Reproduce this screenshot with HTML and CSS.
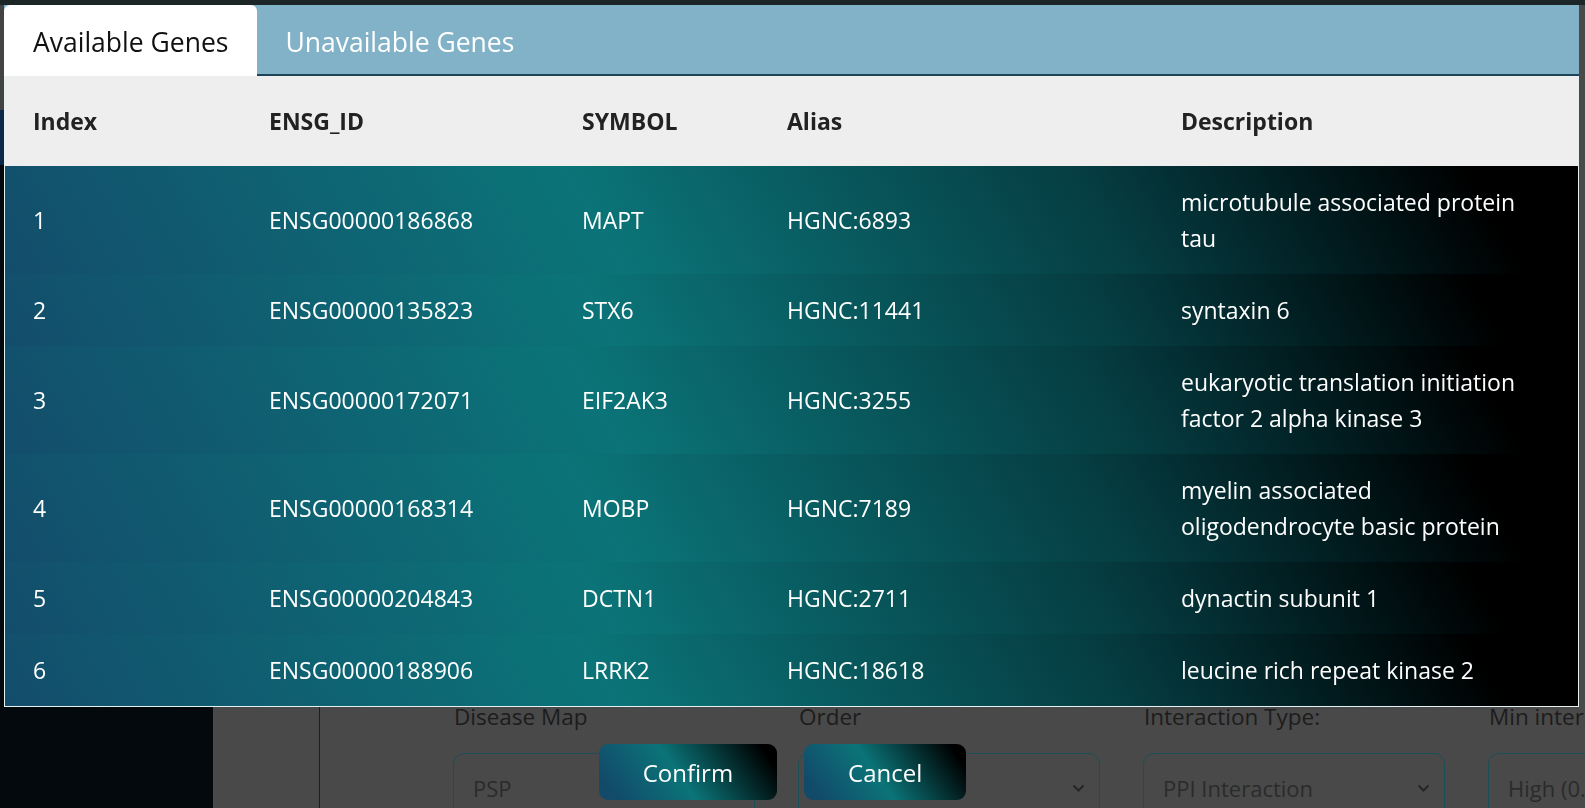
FILE: index.html
```html
<!DOCTYPE html>
<html lang="en">
<head>
<meta charset="utf-8">
<title>Genes</title>
<link rel="stylesheet" href="styles.css">
</head>
<body>
<div class="page">
  <div class="topstrip"></div>
  <div class="content">
    <aside class="sidebar">
      <div class="sb-gray"></div>
      <div class="sb-navy"></div>
    </aside>
    <div class="main">
      <div class="leftpanel"></div>
      <div class="form">
        <div class="field">
          <div class="field-label">Disease Map</div>
          <div class="select"><span>PSP</span><svg class="chev" width="13" height="8" viewBox="0 0 13 8"><path d="M1.5 1.5 L6.5 6.5 L11.5 1.5" fill="none" stroke="#262626" stroke-width="2"/></svg></div>
        </div>
        <div class="field">
          <div class="field-label">Order</div>
          <div class="select"><span>1</span><svg class="chev" width="13" height="8" viewBox="0 0 13 8"><path d="M1.5 1.5 L6.5 6.5 L11.5 1.5" fill="none" stroke="#262626" stroke-width="2"/></svg></div>
        </div>
        <div class="field">
          <div class="field-label">Interaction Type:</div>
          <div class="select"><span>PPI Interaction</span><svg class="chev" width="13" height="8" viewBox="0 0 13 8"><path d="M1.5 1.5 L6.5 6.5 L11.5 1.5" fill="none" stroke="#262626" stroke-width="2"/></svg></div>
        </div>
        <div class="field">
          <div class="field-label">Min interaction score:</div>
          <div class="select"><span>High (0.700)</span><svg class="chev" width="13" height="8" viewBox="0 0 13 8"><path d="M1.5 1.5 L6.5 6.5 L11.5 1.5" fill="none" stroke="#262626" stroke-width="2"/></svg></div>
        </div>
      </div>
    </div>
  </div>
</div>

<div class="modal">
  <div class="tabs">
    <div class="tab active">Available Genes</div>
    <div class="tab">Unavailable Genes</div>
  </div>
  <div class="table-wrap">
    <div class="row head">
      <div class="cell">Index</div>
      <div class="cell">ENSG_ID</div>
      <div class="cell">SYMBOL</div>
      <div class="cell">Alias</div>
      <div class="cell">Description</div>
    </div>
    <div class="row body">
      <div class="cell">1</div>
      <div class="cell">ENSG00000186868</div>
      <div class="cell">MAPT</div>
      <div class="cell">HGNC:6893</div>
      <div class="cell">microtubule associated protein tau</div>
    </div>
    <div class="row body">
      <div class="cell">2</div>
      <div class="cell">ENSG00000135823</div>
      <div class="cell">STX6</div>
      <div class="cell">HGNC:11441</div>
      <div class="cell">syntaxin 6</div>
    </div>
    <div class="row body">
      <div class="cell">3</div>
      <div class="cell">ENSG00000172071</div>
      <div class="cell">EIF2AK3</div>
      <div class="cell">HGNC:3255</div>
      <div class="cell">eukaryotic translation initiation factor 2 alpha kinase 3</div>
    </div>
    <div class="row body">
      <div class="cell">4</div>
      <div class="cell">ENSG00000168314</div>
      <div class="cell">MOBP</div>
      <div class="cell">HGNC:7189</div>
      <div class="cell">myelin associated oligodendrocyte basic protein</div>
    </div>
    <div class="row body">
      <div class="cell">5</div>
      <div class="cell">ENSG00000204843</div>
      <div class="cell">DCTN1</div>
      <div class="cell">HGNC:2711</div>
      <div class="cell">dynactin subunit 1</div>
    </div>
    <div class="row body">
      <div class="cell">6</div>
      <div class="cell">ENSG00000188906</div>
      <div class="cell">LRRK2</div>
      <div class="cell">HGNC:18618</div>
      <div class="cell">leucine rich repeat kinase 2</div>
    </div>
  </div>
  <div class="footer">
    <button class="btn">Confirm</button>
    <button class="btn">Cancel</button>
  </div>
</div>
</body>
</html>
```

FILE: styles.css
```css
html, body {
  margin: 0;
  padding: 0;
}
body {
  width: 1585px;
  height: 808px;
  overflow: hidden;
  background: #494949;
  font-family: "Open Sans", "Noto Sans", sans-serif;
}

/* background page (dimmed) */
.page {
  display: flex;
  flex-direction: column;
  height: 808px;
}
.topstrip {
  flex: none;
  height: 5px;
  background: #1c2627;
}
.content {
  flex: 1;
  display: flex;
  min-height: 0;
}
.sidebar {
  flex: none;
  width: 213px;
  display: flex;
  flex-direction: column;
  background: #03090c;
}
.sb-gray {
  height: 105px;
  background: #434343;
}
.sb-navy {
  height: 55px;
  background: #0b2846;
}
.main {
  flex: 1;
  display: flex;
  background: #494949;
  overflow: hidden;
}
.leftpanel {
  flex: none;
  width: 106px;
  border-right: 1px solid #1e1e1e;
}
.form {
  display: flex;
  gap: 43px;
  padding: 697px 0 0 133px;
}
.field {
  flex: none;
  width: 302px;
}
.field-label {
  font-size: 22.5px;
  line-height: 30px;
  color: #1c1c1c;
  padding-left: 1px;
  white-space: nowrap;
}
.select {
  margin-top: 21px;
  height: 70px;
  box-sizing: border-box;
  border: 1px solid #1c4f55;
  border-radius: 11px;
  display: flex;
  align-items: center;
  justify-content: space-between;
  padding: 0 14px 0 19px;
  font-size: 22px;
  color: #2b2b2b;
}

/* modal */
.modal {
  position: fixed;
  left: 4px;
  top: 5px;
  width: 1575px;
}
.tabs {
  display: flex;
  align-items: flex-start;
  height: 71px;
  box-sizing: border-box;
  background: #82b2c8;
  border-bottom: 2px solid #1b4557;
}
.tab {
  height: 71px;
  box-sizing: border-box;
  padding: 19px 29px 0 28px;
  font-size: 26.5px;
  line-height: 36px;
  color: #ffffff;
  white-space: nowrap;
}
.tab.active {
  padding-left: 29px;
  background: #ffffff;
  color: #111111;
  border-radius: 6px 6px 0 0;
}
.table-wrap {
  border: 1px solid #e4f2f4;
  border-top: none;
}
.row {
  display: grid;
  grid-template-columns: 236px 313px 205px 394px 425px;
  align-items: center;
}
.cell {
  font-size: 23px;
  line-height: 36px;
  padding: 18px 37px 18px 28px;
}
.head {
  background: #eeeeee;
}
.head .cell {
  padding-top: 27px;
  padding-bottom: 27px;
  font-weight: 700;
  color: #222222;
}
.body {
  background: linear-gradient(60deg, #134d6b 0%, #0b7478 38%, #053c41 70%, #01181b 84%, #000000 93%);
}
.body .cell {
  color: #ffffff;
}
.footer {
  display: flex;
  justify-content: center;
  gap: 27px;
  margin-top: 37px;
  padding-right: 18px;
}
.btn {
  height: 56px;
  padding: 0 44px;
  border: none;
  border-radius: 9px;
  font-family: "Open Sans", "Noto Sans", sans-serif;
  font-size: 24px;
  color: #ffffff;
  background: linear-gradient(55deg, #124a6a 8%, #0b7478 45%, #000000 92%);
  cursor: pointer;
}
```
